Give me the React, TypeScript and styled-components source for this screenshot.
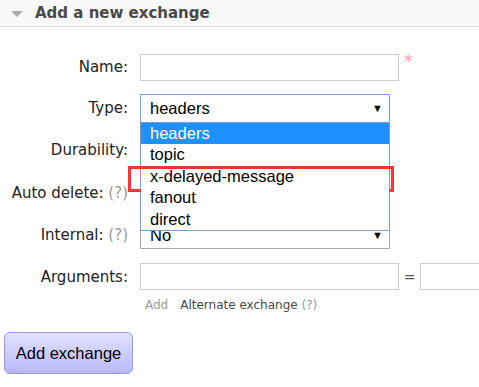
import React from "react";
import styled, { createGlobalStyle } from "styled-components";

const GlobalStyle = createGlobalStyle`
  html, body {
    margin: 0;
    padding: 0;
    overflow: hidden;
    background: #fff;
  }
  body {
    font-family: "DejaVu Sans", Verdana, sans-serif;
    color: #222;
  }
`;

interface IRow {
  h: number;
}

const exchangeTypes = ["headers", "topic", "x-delayed-message", "fanout", "direct"];

const App: React.FC = () => {
  return (
    <>
      <GlobalStyle />
      <Section>
        <SectionHeader>
          <Toggle />
          <Title>Add a new exchange</Title>
        </SectionHeader>
        <Form>
          <Row h={40}>
            <Label>Name:</Label>
            <Field>
              <TextInput />
              <Required>*</Required>
            </Field>
          </Row>
          <Row h={42}>
            <Label>Type:</Label>
            <Field>
              <SelectWrap>
                <Select active>
                  <span>headers</span>
                  <Arrow>▼</Arrow>
                </Select>
                <DropList>
                  {exchangeTypes.map((t, i) => (
                    <Option key={t} selected={i === 0}>
                      {t}
                      {t === "x-delayed-message" && <Highlight />}
                    </Option>
                  ))}
                </DropList>
              </SelectWrap>
            </Field>
          </Row>
          <Row h={42}>
            <Label>Durability:</Label>
            <Field>
              <Select>
                <Arrow>▼</Arrow>
              </Select>
            </Field>
          </Row>
          <Row h={43}>
            <Label>
              Auto delete: <Help>(?)</Help>
            </Label>
            <Field>
              <Select>
                <Arrow>▼</Arrow>
              </Select>
            </Field>
          </Row>
          <Row h={42}>
            <Label>
              Internal: <Help>(?)</Help>
            </Label>
            <Field>
              <Select>
                <span>No</span>
                <Arrow>▼</Arrow>
              </Select>
            </Field>
          </Row>
          <Row h={41}>
            <Label>Arguments:</Label>
            <Field>
              <TextInput />
              <Equals>=</Equals>
              <TextInput />
            </Field>
          </Row>
          <LinksRow>
            <AddLink>Add</AddLink>
            <AltLink>
              Alternate exchange <Help>(?)</Help>
            </AltLink>
          </LinksRow>
        </Form>
        <SubmitButton>Add exchange</SubmitButton>
      </Section>
    </>
  );
};

export default App;

const Section = styled.div`
  width: 479px;
  overflow: hidden;
`;

const SectionHeader = styled.div`
  display: flex;
  align-items: center;
  height: 26px;
  padding-left: 11px;
  background: #f8f8f8;
  border-bottom: 1px solid #ddd;
`;

const Toggle = styled.div`
  width: 0;
  height: 0;
  border-left: 6px solid transparent;
  border-right: 6px solid transparent;
  border-top: 6px solid #aaa;
  margin-right: 12px;
  margin-top: 1px;
`;

const Title = styled.h2`
  margin: 0;
  font-size: 15px;
  font-weight: bold;
  color: #484848;
`;

const Form = styled.div`
  display: flex;
  flex-direction: column;
  padding-top: 20px;
`;

const Row = styled.div<IRow>`
  display: flex;
  align-items: center;
  height: ${(props) => props.h}px;
`;

const Label = styled.div`
  flex-shrink: 0;
  width: 128px;
  text-align: right;
  font-size: 15px;
  color: #222;
  white-space: nowrap;
`;

const Help = styled.span`
  color: #999;
`;

const Field = styled.div`
  display: flex;
  align-items: center;
  flex-shrink: 0;
  margin-left: 12px;
`;

const TextInput = styled.div`
  box-sizing: border-box;
  width: 259px;
  height: 27px;
  border: 1px solid #ccc;
  background: #fff;
  flex-shrink: 0;
`;

const Required = styled.span`
  margin-left: 5px;
  margin-top: -12px;
  font-size: 17px;
  color: #f9a0a0;
`;

const Equals = styled.span`
  width: 21px;
  text-align: center;
  font-size: 14px;
  color: #555;
`;

const SelectWrap = styled.div`
  position: relative;
`;

const Select = styled.div<{ active?: boolean }>`
  box-sizing: border-box;
  display: flex;
  align-items: center;
  width: 250px;
  height: ${(props) => (props.active ? 29 : 27)}px;
  padding: 0 6px 0 9px;
  border: 1px solid ${(props) => (props.active ? "#7b9bd8" : "#aaa")};
  background: #fff;
  font-family: "Liberation Sans", Arial, sans-serif;
  font-size: 16.5px;
  color: #000;
`;

const Arrow = styled.span`
  margin-left: auto;
  font-size: 11px;
  color: #000;
`;

const DropList = styled.div`
  position: absolute;
  top: 100%;
  left: 0;
  z-index: 5;
  box-sizing: border-box;
  width: 250px;
  border: 1px solid #7f9db9;
  border-top: none;
  background: #fff;
`;

const Option = styled.div<{ selected?: boolean }>`
  position: relative;
  height: 21.5px;
  line-height: 21.5px;
  padding-left: 9px;
  font-family: "Liberation Sans", Arial, sans-serif;
  font-size: 16.5px;
  color: ${(props) => (props.selected ? "#fff" : "#000")};
  background: ${(props) => (props.selected ? "#1e90ff" : "#fff")};
`;

const Highlight = styled.div`
  position: absolute;
  top: 0;
  left: -13px;
  right: -5px;
  height: 26px;
  box-sizing: border-box;
  border: 3px solid #f33;
`;

const LinksRow = styled.div`
  display: flex;
  align-items: center;
  height: 16px;
  padding-left: 145px;
  font-size: 12px;
`;

const AddLink = styled.span`
  color: #999;
  margin-right: 12px;
`;

const AltLink = styled.span`
  color: #484848;
`;

const SubmitButton = styled.button`
  display: block;
  box-sizing: border-box;
  width: 129px;
  height: 42px;
  margin: 19px 0 0 4px;
  padding: 0;
  border: 1px solid #99d;
  border-radius: 6px;
  background: linear-gradient(#e2e2ff, #b8b8fa);
  font-family: "Liberation Sans", Arial, sans-serif;
  font-size: 16.5px;
  color: #000;
`;
